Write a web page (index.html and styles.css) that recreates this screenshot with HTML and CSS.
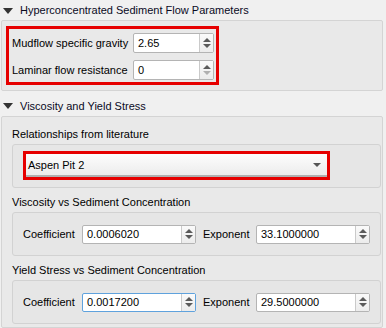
FILE: index.html
```html
<!DOCTYPE html>
<html lang="en">
<head>
  <meta charset="UTF-8">
  <title>Mudflow Parameters</title>
  <link rel="stylesheet" href="styles.css">
</head>
<body>
  <div class="section-head head-first">
    <span class="caret"></span>Hyperconcentrated Sediment Flow Parameters
  </div>
  <div class="panel panel-hyper">
    <div class="highlight hyper-form">
      <label class="field-label">Mudflow specific gravity</label>
      <div class="spin">
        <span class="spin-value">2.65</span>
        <span class="spin-btns"><i class="up"></i><i class="down"></i></span>
      </div>
      <label class="field-label">Laminar flow resistance</label>
      <div class="spin">
        <span class="spin-value">0</span>
        <span class="spin-btns"><i class="up"></i><i class="down off"></i></span>
      </div>
    </div>
  </div>

  <div class="section-head">
    <span class="caret"></span>Viscosity and Yield Stress
  </div>
  <div class="panel panel-visc">
    <div class="caption">Relationships from literature</div>
    <div class="group group-combo">
      <div class="highlight combo-wrap">
        <div class="combo">
          <span>Aspen Pit 2</span>
          <span class="combo-arrow"></span>
        </div>
      </div>
    </div>

    <div class="caption">Viscosity vs Sediment Concentration</div>
    <div class="group coef-row">
      <label class="field-label coef-label">Coefficient</label>
      <div class="spin spin-wide">
        <span class="spin-value">0.0006020</span>
        <span class="spin-btns"><i class="up"></i><i class="down"></i></span>
      </div>
      <label class="field-label exp-label">Exponent</label>
      <div class="spin spin-wide">
        <span class="spin-value">33.1000000</span>
        <span class="spin-btns"><i class="up"></i><i class="down"></i></span>
      </div>
    </div>

    <div class="caption">Yield Stress vs Sediment Concentration</div>
    <div class="group coef-row">
      <label class="field-label coef-label">Coefficient</label>
      <div class="spin spin-wide focused">
        <span class="spin-value">0.0017200</span>
        <span class="spin-btns"><i class="up"></i><i class="down"></i></span>
      </div>
      <label class="field-label exp-label">Exponent</label>
      <div class="spin spin-wide">
        <span class="spin-value">29.5000000</span>
        <span class="spin-btns"><i class="up"></i><i class="down"></i></span>
      </div>
    </div>
  </div>
</body>
</html>
```

FILE: styles.css
```css
body {
  margin: 0;
  background: #f0f0f0;
  color: #000;
  font-family: "Liberation Sans", Arial, sans-serif;
  font-size: 11px;
  width: 386px;
  height: 328px;
  overflow: hidden;
}

.section-head {
  height: 21px;
  display: flex;
  align-items: center;
  padding-left: 3px;
  margin-top: 4px;
  color: #0a0a1e;
}

.head-first {
  height: 20px;
  margin-top: 0;
}

.caret {
  width: 0;
  height: 0;
  border-left: 5px solid transparent;
  border-right: 5px solid transparent;
  border-top: 6px solid #333;
  margin-right: 7px;
  margin-top: 1px;
}

.panel {
  margin: 0 3px 0 1px;
  background: #e9e9e9;
  border: 1px solid #d4d4d4;
  border-radius: 2px;
}

.panel-hyper {
  height: 71px;
  padding: 5px 0 0 4px;
  box-sizing: border-box;
}

.highlight {
  border: 3px solid #e60000;
}

.hyper-form {
  width: 202px;
  height: 47px;
  display: grid;
  grid-template-columns: 121px 81px;
  grid-template-rows: 20px 20px;
  row-gap: 7px;
  align-items: center;
  padding: 4px 2px 2px 3px;
}

.field-label {
  white-space: nowrap;
}

.spin {
  display: flex;
  height: 20px;
  box-sizing: border-box;
  background: #fff;
  border: 1px solid #b4b4b4;
  border-radius: 2px;
}

.spin.focused {
  border-color: #5fa2dd;
}

.spin-value {
  flex: 1;
  padding-left: 4px;
  line-height: 18px;
}

.spin-btns {
  width: 13px;
  border-left: 1px solid #cacaca;
  background: linear-gradient(#fafafa, #ececec);
  display: flex;
  flex-direction: column;
  align-items: center;
  justify-content: center;
  gap: 2px;
}

.spin-btns i {
  width: 0;
  height: 0;
  border-left: 4px solid transparent;
  border-right: 4px solid transparent;
}

.spin-btns .up {
  border-bottom: 4px solid #5a5a5a;
}

.spin-btns .down {
  border-top: 4px solid #5a5a5a;
}

.spin-btns .down.off {
  border-top-color: #b0b0b0;
}

.panel-visc {
  height: 212px;
  box-sizing: border-box;
  padding-top: 3px;
}

.caption {
  height: 24px;
  box-sizing: border-box;
  padding: 6px 0 0 10px;
  line-height: 17px;
  white-space: nowrap;
}

.group {
  height: 44px;
  box-sizing: border-box;
  margin: 0 0 0 10px;
  width: 369px;
  background: #e6e6e6;
  border: 1px solid #d2d2d2;
  border-radius: 3px;
}

.group-combo {
  padding: 6px 0 0 10px;
}

.combo-wrap {
  width: 301px;
}

.combo {
  height: 23px;
  display: flex;
  align-items: center;
  justify-content: space-between;
  padding: 0 6px 0 2px;
  background: linear-gradient(#fdfdfd, #ececec);
  border-bottom: 2px solid #b0b0b0;
  box-sizing: border-box;
}

.combo-arrow {
  width: 0;
  height: 0;
  border-left: 4px solid transparent;
  border-right: 4px solid transparent;
  border-top: 4px solid #555;
}

.coef-row {
  display: flex;
  align-items: center;
  padding-left: 10px;
}

.coef-label {
  width: 59px;
}

.exp-label {
  width: 53px;
  margin-left: 7px;
}

.spin-wide {
  width: 114px;
  height: 19px;
}

.spin-wide .spin-value {
  line-height: 17px;
}
```
